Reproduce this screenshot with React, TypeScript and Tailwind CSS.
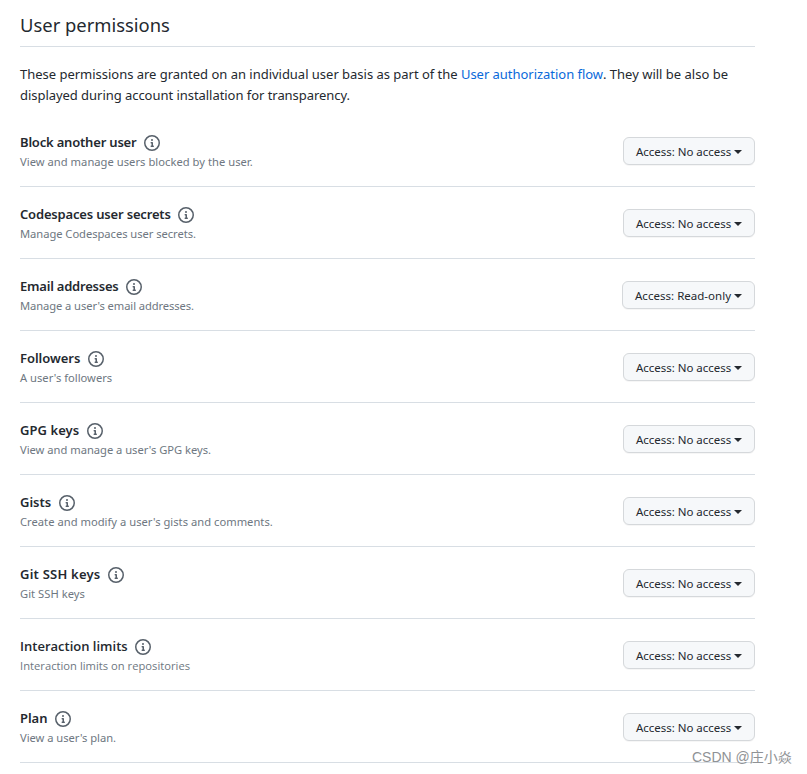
type Permission = {
  title: string;
  titleClass: string;
  description: string;
  descriptionClass: string;
  access: string;
  accessClass: string;
};

const none = { access: "No access", accessClass: "w-[132px] tracking-[-0.03px]" };
const noto = "font-['Noto_Sans','Open_Sans',sans-serif]";
const open = "font-['Open_Sans','Noto_Sans',sans-serif]";

const permissions: Permission[] = [
  { title: "Block another user", titleClass: "tracking-[-0.19px]", description: "View and manage users blocked by the user.", descriptionClass: "tracking-[0.025px]", ...none },
  { title: "Codespaces user secrets", titleClass: "tracking-[-0.175px]", description: "Manage Codespaces user secrets.", descriptionClass: "tracking-[-0.05px]", ...none },
  { title: "Email addresses", titleClass: "tracking-[-0.22px]", description: "Manage a user's email addresses.", descriptionClass: "tracking-[-0.09px]", access: "Read-only", accessClass: "w-[133px] tracking-[0.02px]" },
  { title: "Followers", titleClass: "tracking-[-0.03px]", description: "A user's followers", descriptionClass: "", ...none },
  { title: "GPG keys", titleClass: "tracking-[0.05px]", description: "View and manage a user's GPG keys.", descriptionClass: "tracking-[-0.02px]", ...none },
  { title: "Gists", titleClass: "", description: "Create and modify a user's gists and comments.", descriptionClass: "tracking-[0.015px]", ...none },
  { title: "Git SSH keys", titleClass: "tracking-[0.22px]", description: "Git SSH keys", descriptionClass: "tracking-[0.03px]", ...none },
  { title: "Interaction limits", titleClass: `${open} tracking-[0.005px]`, description: "Interaction limits on repositories", descriptionClass: `${open} tracking-[0.015px]`, ...none },
  { title: "Plan", titleClass: "tracking-[-0.05px]", description: "View a user's plan.", descriptionClass: "tracking-[-0.03px]", ...none },
];

function InfoIcon() {
  return (
    <svg viewBox="0 0 16 16" className="size-4 shrink-0 fill-[#57606a]" aria-hidden="true">
      <path d="M0 8a8 8 0 1 1 16 0A8 8 0 0 1 0 8Zm8-6.5a6.5 6.5 0 1 0 0 13 6.5 6.5 0 0 0 0-13ZM6.5 7.75A.75.75 0 0 1 7.25 7h1a.75.75 0 0 1 .75.75v2.75h.25a.75.75 0 0 1 0 1.5h-2a.75.75 0 0 1 0-1.5h.25v-2h-.25a.75.75 0 0 1-.75-.75ZM8 6a1 1 0 1 1 0-2 1 1 0 0 1 0 2Z" />
    </svg>
  );
}

function PermissionRow({ item }: { item: Permission }) {
  return (
    <li className="flex h-[72px] items-start justify-between border-b border-[#d8dee4]">
      <div className="pt-[18px]">
        <div className="flex h-[18px] items-center gap-[7.5px]">
          <h3 className={`text-[13px] leading-[18px] font-semibold text-[#24292f] ${item.titleClass}`}>{item.title}</h3>
          <span className="pt-px"><InfoIcon /></span>
        </div>
        <p className={`mt-0.5 text-[11.2px] leading-[18px] text-[#6e7781] ${item.descriptionClass}`}>{item.description}</p>
      </div>
      <button type="button" className={`mt-[22px] flex h-7 items-center justify-between rounded-md border border-[#d5d8db] bg-[#f6f8fa] px-3 pt-px text-[11.5px] leading-5 whitespace-nowrap text-[#24292f] shadow-[0_1px_0_rgba(27,31,36,0.04)] ${item.accessClass}`}>
        <span className="pt-px">Access: {item.access}</span>
        <span className="border-x-4 border-t-4 border-x-transparent border-t-[#24292f]" />
      </button>
    </li>
  );
}

export default function App() {
  return (
    <main className={`relative h-[774px] w-[807px] overflow-hidden bg-white pr-[52px] pl-5 text-[#24292f] ${noto}`}>
      <h2 className="h-[47px] border-b border-[#d8dee4] pt-[11px] text-[18.4px] leading-7">User permissions</h2>
      <p className="h-[68px] pt-[17px] text-[13px] leading-[21px] whitespace-nowrap">
        <span className="tracking-[-0.019px]">These permissions are granted on an individual user basis as part of the </span>
        <a href="#flow" className="tracking-[-0.035px] text-[#0969da]">User authorization flow</a>
        <span>. They will be also be</span>
        <br />
        <span className="tracking-[-0.044px]">displayed during account installation for transparency.</span>
      </p>
      <ul>
        {permissions.map((item) => (
          <PermissionRow key={item.title} item={item} />
        ))}
      </ul>
      <div className="absolute top-[747px] left-[692px] font-['Liberation_Sans','Noto_Sans_CJK_SC',sans-serif] text-[14px] leading-5 whitespace-nowrap text-[#8f9295]">CSDN @庄小焱</div>
    </main>
  );
}
